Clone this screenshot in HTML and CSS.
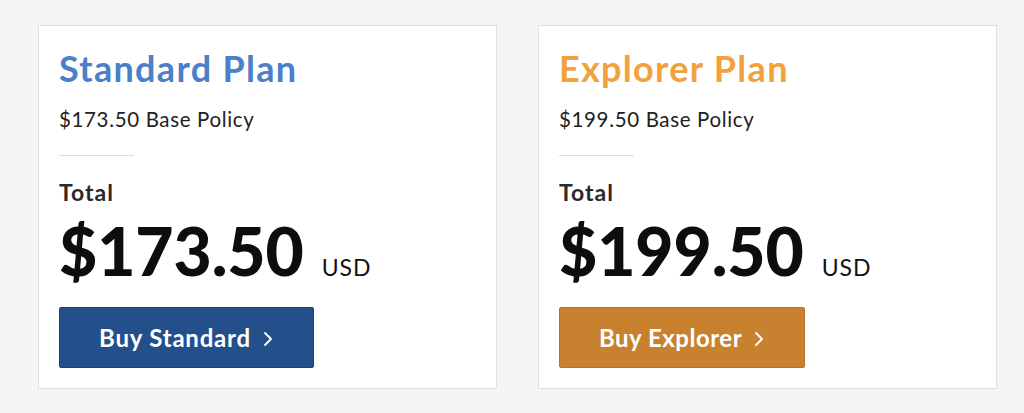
FILE: index.html
```html
<!DOCTYPE html>
<html lang="en">
<head>
<meta charset="utf-8">
<title>Plans</title>
<link rel="stylesheet" href="styles.css">
</head>
<body>
<div class="plans">
  <div class="card">
    <h2 class="title title-standard">Standard Plan</h2>
    <p class="base">$173.50 Base Policy</p>
    <hr class="divider">
    <div class="total-label">Total</div>
    <div class="price-row">
      <span class="price">$173.50</span>
      <span class="currency">USD</span>
    </div>
    <a class="btn btn-standard" href="#">
      <span class="btn-text">Buy Standard</span>
      <svg class="chev" width="10" height="16" viewBox="0 0 10 16" aria-hidden="true"><path d="M2 2 L8 8 L2 14" fill="none" stroke="#fff" stroke-width="1.8" stroke-linecap="round" stroke-linejoin="round"/></svg>
    </a>
  </div>
  <div class="card">
    <h2 class="title title-explorer">Explorer Plan</h2>
    <p class="base">$199.50 Base Policy</p>
    <hr class="divider">
    <div class="total-label">Total</div>
    <div class="price-row">
      <span class="price">$199.50</span>
      <span class="currency">USD</span>
    </div>
    <a class="btn btn-explorer" href="#">
      <span class="btn-text">Buy Explorer</span>
      <svg class="chev" width="10" height="16" viewBox="0 0 10 16" aria-hidden="true"><path d="M2 2 L8 8 L2 14" fill="none" stroke="#fff" stroke-width="1.8" stroke-linecap="round" stroke-linejoin="round"/></svg>
    </a>
  </div>
</div>
</body>
</html>
```
FILE: styles.css
```css
html, body {
  margin: 0;
  padding: 0;
}
body {
  background: #f6f5f4;
  font-family: Lato, "Noto Sans", sans-serif;
  color: #1a1a1a;
  width: 1024px;
  height: 413px;
  overflow: hidden;
}
.plans {
  display: flex;
  gap: 41px;
  padding: 25px 0 0 38px;
}
.card {
  box-sizing: border-box;
  width: 459px;
  height: 364px;
  background: #fff;
  border: 1px solid #e2e1e0;
  padding: 22px 20px 0 20px;
  display: flex;
  flex-direction: column;
  align-items: flex-start;
}
.title {
  margin: 0;
  font-size: 36px;
  line-height: 40px;
  font-weight: 700;
  letter-spacing: 1.3px;
  white-space: nowrap;
}
.title-standard { color: #4a80c9; }
.title-explorer { color: #f2a23c; }
.base {
  margin: 19px 0 0 0;
  font-size: 20.5px;
  line-height: 24px;
  font-weight: 400;
  color: #222;
  letter-spacing: 0.65px;
}
.divider {
  margin: 24px 0 0 0;
  width: 75px;
  height: 1px;
  border: 0;
  background: #dcdcdc;
}
.total-label {
  margin-top: 23px;
  font-size: 23px;
  line-height: 26px;
  font-weight: 700;
  color: #2a2a2a;
  letter-spacing: 1px;
}
.price-row {
  margin-top: 13px;
  display: flex;
  align-items: baseline;
}
.price {
  font-size: 66px;
  line-height: 66px;
  font-weight: 900;
  color: #0d0d0d;
  letter-spacing: -0.1px;
}
.currency {
  margin-left: 18px;
  font-size: 23px;
  font-weight: 400;
  color: #111;
  letter-spacing: 1px;
}
.btn {
  margin-top: 23px;
  box-sizing: border-box;
  height: 61px;
  display: inline-flex;
  align-items: center;
  gap: 12px;
  padding: 0 40px 0 39px;
  border-radius: 2px;
  text-decoration: none;
  color: #fff;
  font-size: 24px;
  font-weight: 700;
  letter-spacing: 0.8px;
  white-space: nowrap;
}
.btn-standard {
  background: #234f8a;
  border: 1px solid #1d4277;
}
.btn-explorer {
  background: #c8822f;
  border: 1px solid #b27229;
  letter-spacing: 0.5px;
}
.chev {
  display: block;
  flex: none;
  margin-top: 3px;
}
```
